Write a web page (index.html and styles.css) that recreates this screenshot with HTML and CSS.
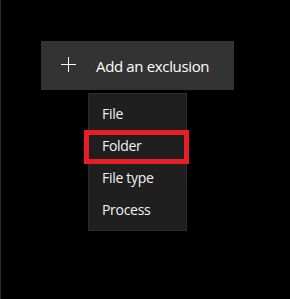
FILE: index.html
```html
<!DOCTYPE html>
<html lang="en">
<head>
    <meta charset="UTF-8">
    <meta name="viewport" content="width=device-width, initial-scale=1.0">
    <title>Exclusions</title>
    <link rel="stylesheet" href="styles.css">
</head>
<body>
    <div class="page">
        <button class="add-btn">
            <svg class="add-icon" viewBox="0 0 15 15" fill="none" stroke="currentColor" shape-rendering="crispEdges">
                <path d="M7.5 0v15M0 7.5h15" stroke-width="1"></path>
            </svg>
            <span>Add an exclusion</span>
        </button>

        <ul class="menu">
            <li class="menu-item">File</li>
            <li class="menu-item highlighted">Folder</li>
            <li class="menu-item">File type</li>
            <li class="menu-item">Process</li>
        </ul>
    </div>
</body>
</html>
```

FILE: styles.css
```css
* {
    margin: 0;
    padding: 0;
    box-sizing: border-box;
}

body {
    font-family: 'Open Sans', 'Noto Sans', sans-serif;
    background: #000;
    color: #fff;
    height: 100vh;
}

.page {
    height: 100%;
    border-left: 1px solid #2e2e2e;
    padding: 41px 0 0 40px;
}

.add-btn {
    display: flex;
    align-items: center;
    width: 193px;
    height: 49px;
    padding-left: 20px;
    background: #333;
    border: none;
    color: #fff;
    font-family: inherit;
    font-size: 15px;
    letter-spacing: -0.35px;
    cursor: pointer;
}

.add-icon {
    width: 15px;
    height: 15px;
    margin: 0 20px 2px 0;
}

.menu {
    list-style: none;
    width: 99px;
    height: 138px;
    margin: 3px 0 0 47px;
    padding: 4px 0;
    background: #1f1f1f;
    border: 1px solid #2c2c2c;
}

.menu-item {
    position: relative;
    height: 32px;
    line-height: 32px;
    padding-left: 13px;
    font-size: 14px;
    letter-spacing: -0.3px;
    color: #f2f2f2;
}

.menu-item.highlighted::after {
    content: '';
    position: absolute;
    top: 0;
    bottom: -2px;
    left: -5px;
    right: -3px;
    border: 5px solid #ea1c26;
}
```
